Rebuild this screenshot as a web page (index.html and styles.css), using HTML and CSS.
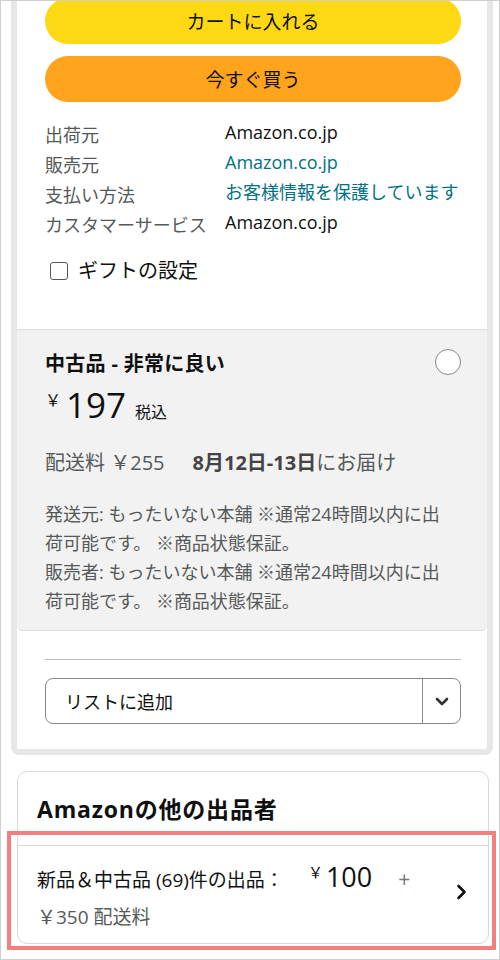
FILE: index.html
```html
<!DOCTYPE html>
<html lang="ja">
<head>
    <meta charset="UTF-8">
    <meta name="viewport" content="width=device-width, initial-scale=1.0">
    <title>商品の購入</title>
    <link rel="stylesheet" href="styles.css">
</head>
<body>
    <div class="frame">
        <div class="buybox">
            <div class="buy-top">
                <button class="btn btn-cart">カートに入れる</button>
                <button class="btn btn-buy">今すぐ買う</button>

                <div class="info">
                    <div class="info-row"><span class="info-label">出荷元</span><span class="info-value">Amazon.co.jp</span></div>
                    <div class="info-row"><span class="info-label">販売元</span><span class="info-value link">Amazon.co.jp</span></div>
                    <div class="info-row"><span class="info-label">支払い方法</span><span class="info-value link">お客様情報を保護しています</span></div>
                    <div class="info-row"><span class="info-label">カスタマーサービス</span><span class="info-value">Amazon.co.jp</span></div>
                </div>

                <label class="gift"><span class="check"></span>ギフトの設定</label>
            </div>

            <div class="used">
                <div class="used-head">
                    <span class="used-title">中古品 - 非常に良い</span>
                    <span class="radio"></span>
                </div>
                <div class="price">
                    <span class="yen">￥</span><span class="amount">197</span><span class="tax">税込</span>
                </div>
                <p class="delivery">配送料 ￥255<b>8月12日-13日</b>にお届け</p>
                <div class="seller">
                    <p>発送元: もったいない本舗 ※通常24時間以内に出荷可能です。 ※商品状態保証。</p>
                    <p>販売者: もったいない本舗 ※通常24時間以内に出荷可能です。 ※商品状態保証。</p>
                </div>
            </div>

            <div class="list-area">
                <div class="divider"></div>
                <div class="list-select">
                    <span class="list-text">リストに追加</span>
                    <span class="list-arrow">
                        <svg width="14" height="9" viewBox="0 0 14 9"><path d="M2 2l5 5 5-5" fill="none" stroke="#333" stroke-width="2.6" stroke-linecap="round" stroke-linejoin="round"/></svg>
                    </span>
                </div>
            </div>
        </div>

        <div class="others">
            <h2 class="others-title">Amazonの他の出品者</h2>
            <div class="offer-row">
                <p class="offer-text"><span class="offer-main">新品＆中古品 (69)件の出品：<span class="offer-yen">￥</span><span class="offer-price">100</span><span class="offer-plus">+</span></span> <span class="offer-ship">￥350 配送料</span></p>
                <svg class="offer-chevron" width="12" height="16" viewBox="0 0 12 16"><path d="M2.5 2l6 6-6 6" fill="none" stroke="#0f1111" stroke-width="2.6" stroke-linecap="round" stroke-linejoin="round"/></svg>
            </div>
            <div class="highlight"></div>
        </div>
    </div>
</body>
</html>
```

FILE: styles.css
```css
* {
    margin: 0;
    padding: 0;
    box-sizing: border-box;
}

body {
    font-family: "Open Sans", "Noto Sans CJK JP", sans-serif;
    color: #0f1111;
    background: #fff;
}

.frame {
    position: relative;
    width: 500px;
    height: 960px;
    border: 1px solid #cfcfcf;
    padding: 0 6px 0 10px;
    overflow: hidden;
}

/* カート部分 */
.buybox {
    margin-top: -3px;
    border: 6px solid #e7e7e7;
    border-top: none;
    border-radius: 0 0 8px 8px;
    background: #fff;
}

.buy-top {
    padding: 0 26px 43px 28px;
}

.btn {
    display: block;
    width: 100%;
    height: 46px;
    border: none;
    border-radius: 23px;
    font-family: inherit;
    font-size: 19px;
    color: #0f1111;
}
.btn-cart {
    background: #ffd814;
}
.btn-buy {
    margin-top: 12px;
    background: #ffa41c;
}

.info {
    margin-top: 18px;
}
.info-row {
    display: flex;
    font-size: 18px;
    line-height: 30px;
    white-space: nowrap;
}
.info-label {
    width: 180px;
    flex-shrink: 0;
    color: #565959;
}
.info-value {
    position: relative;
    top: -3px;
}
.link {
    color: #007185;
}

.gift {
    display: flex;
    align-items: center;
    margin-top: 16px;
    padding-left: 5px;
    font-size: 20px;
    line-height: 30px;
}
.check {
    width: 18px;
    height: 18px;
    margin-right: 10px;
    border: 1.5px solid #555;
    border-radius: 3px;
    background: #fff;
}

/* 中古品 */
.used {
    background: #f2f2f2;
    border-top: 1px solid #dcdcdc;
    border-bottom: 1px solid #dcdcdc;
    border-radius: 0 0 6px 6px;
    padding: 18px 26px 14px 28px;
}
.used-head {
    display: flex;
    justify-content: space-between;
    align-items: center;
    height: 28px;
}
.used-title {
    font-size: 20px;
    font-weight: bold;
    letter-spacing: 0.3px;
}
.radio {
    width: 26px;
    height: 26px;
    border: 1.5px solid #888;
    border-radius: 50%;
    background: #fff;
}

.price {
    display: flex;
    align-items: baseline;
    margin-top: 7px;
    height: 44px;
    line-height: 44px;
}
.yen {
    font-size: 16px;
    position: relative;
    top: -12px;
    margin-right: 5px;
}
.amount {
    font-size: 35px;
}
.tax {
    font-size: 16px;
    margin-left: 9px;
}

.delivery {
    margin-top: 22px;
    font-size: 20px;
    line-height: 28px;
    color: #565959;
}
.delivery b {
    margin-left: 28px;
    color: #444;
}

.seller {
    margin-top: 23px;
    padding-right: 10px;
    font-size: 18px;
    line-height: 29px;
    color: #565959;
}

/* リスト */
.list-area {
    padding: 28px 26px 25px 28px;
}
.divider {
    height: 1px;
    background: #bbb;
}
.list-select {
    display: flex;
    margin-top: 18px;
    height: 46px;
    border: 1px solid #888;
    border-radius: 8px;
    align-items: center;
}
.list-text {
    flex: 1;
    padding-left: 19px;
    font-size: 18px;
}
.list-arrow {
    display: flex;
    align-items: center;
    justify-content: center;
    width: 38px;
    height: 100%;
    border-left: 1px solid #888;
}

/* 他の出品者 */
.others {
    position: relative;
    margin: 16px 4px 0 6px;
    border: 1px solid #d5d9d9;
    border-radius: 10px;
    height: 173px;
}
.others-title {
    padding: 22px 19px 21px;
    font-size: 23px;
    line-height: 30px;
    font-weight: bold;
    letter-spacing: 0.8px;
    border-bottom: 1px solid #d5d9d9;
}
.offer-row {
    display: flex;
    align-items: center;
    padding: 13px 20px 12px 19px;
}
.offer-text {
    flex: 1;
    font-size: 19px;
    line-height: 36px;
}
.offer-main {
    white-space: nowrap;
}
.offer-yen {
    font-size: 15px;
    position: relative;
    top: -9px;
    margin-left: 24px;
    margin-right: 3px;
}
.offer-price {
    font-size: 27px;
}
.offer-plus {
    margin-left: 26px;
    font-size: 21px;
    color: #777;
}
.offer-ship {
    color: #565959;
}
.offer-chevron {
    margin-bottom: 10px;
}

.highlight {
    position: absolute;
    left: -11px;
    top: 59px;
    width: 489px;
    height: 119px;
    border: 4px solid #f47f7f;
}
```
